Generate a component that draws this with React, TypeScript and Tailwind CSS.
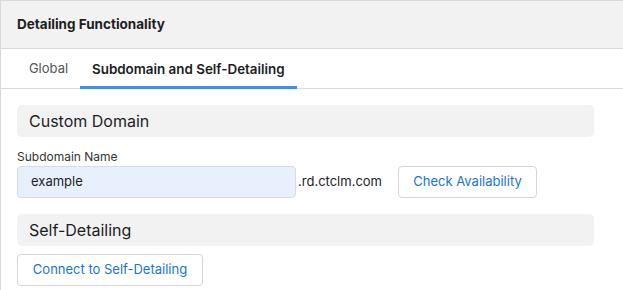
import React from "react";

export default function App() {
  return (
    <div className="w-[623px] h-[290px] overflow-hidden bg-white" style={{ fontFamily: "Inter, 'Noto Sans', sans-serif" }}>
      <div className="w-[640px] border border-[#d9d9d9] bg-white">
        <div className="h-[48px] bg-[#f2f2f2] border-b border-[#d9d9d9] flex items-center px-[16px]">
          <span className="text-[13.5px] font-bold text-[#1d1d1f]">Detailing Functionality</span>
        </div>
        <div className="h-[40px] border-b border-[#d9d9d9] flex items-stretch px-[16px]">
          <div className="flex items-center w-[63px] justify-center text-[13px] text-[#555]">Global</div>
          <div className="flex items-center px-[12px] text-[13.4px] font-semibold text-[#1d1d1f] border-b-[3px] border-[#3b8ff0] pt-[3px] -mb-[1px]">Subdomain and Self-Detailing</div>
        </div>
        <div className="px-[16px] pt-[16px] pb-[8px]">
          <div className="w-[577px] h-[32px] rounded-[5px] bg-[#f2f2f2] flex items-center px-[12px] text-[16px] text-[#1d1d1f]">Custom Domain</div>
          <div className="mt-[12px] text-[12px] leading-[16px] text-[#333]">Subdomain Name</div>
          <div className="mt-[1px] flex items-center">
            <div className="w-[279px] h-[32px] rounded-[4px] border border-[#d6dbe3] bg-[#e8f0fe] flex items-center px-[13px] text-[13px] text-[#1d1d1f]">example</div>
            <span className="ml-[2px] text-[13px] text-[#1d1d1f]">.rd.ctclm.com</span>
            <button className="ml-[16px] w-[139px] h-[32px] rounded-[4px] border border-[#d6d6d6] bg-white text-[13px] text-[#1a73d9]">Check Availability</button>
          </div>
          <div className="mt-[16px] w-[577px] h-[32px] rounded-[5px] bg-[#f2f2f2] flex items-center px-[12px] text-[16px] text-[#1d1d1f]">Self-Detailing</div>
          <button className="mt-[8px] w-[186px] h-[32px] rounded-[4px] border border-[#d6d6d6] bg-white text-[13px] text-[#1a73d9]">Connect to Self-Detailing</button>
        </div>
      </div>
    </div>
  );
}
